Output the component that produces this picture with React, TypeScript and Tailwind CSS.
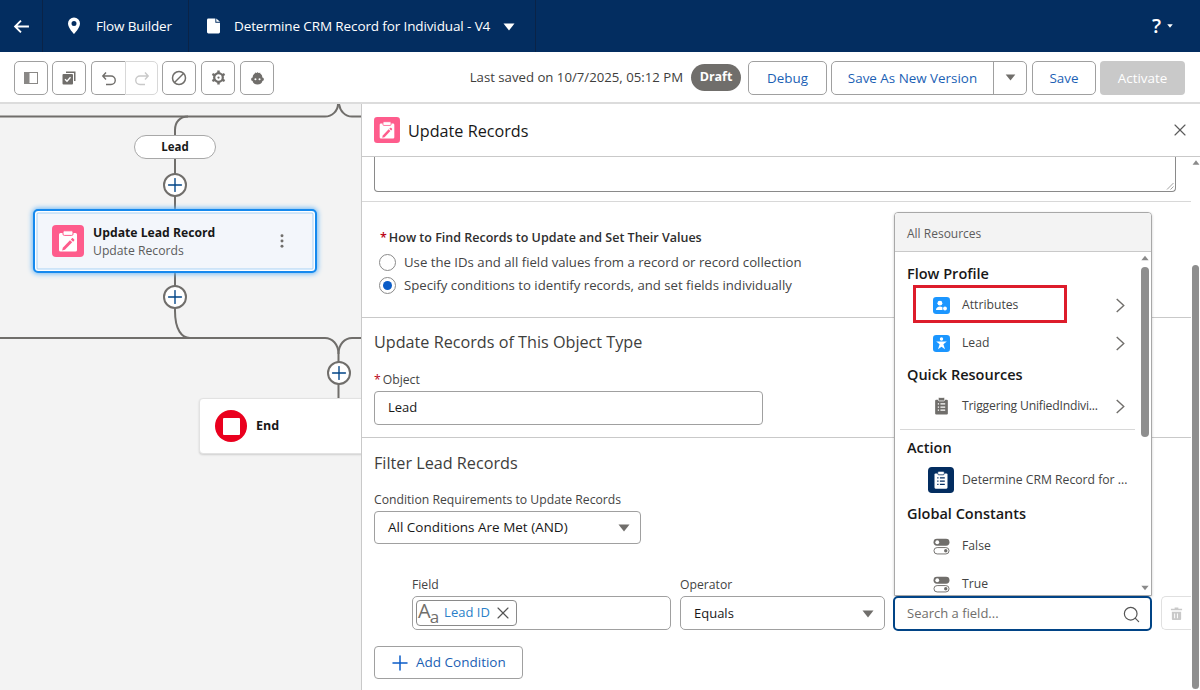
import { X, Search, Plus } from "lucide-react";
import type { ReactNode } from "react";

function Caret({ className }: { className: string }) {
  return (
    <svg viewBox="0 0 12 8" className={className} fill="currentColor">
      <path d="M0.5 0.5h11L6 7.5z" />
    </svg>
  );
}

function ToolBtn({ children, className = "" }: { children: ReactNode; className?: string }) {
  return (
    <div className={`w-[34px] h-[34px] border border-[#a0a0a0] flex items-center justify-center bg-white rounded-[5px] ${className}`}>
      {children}
    </div>
  );
}

function PlusCircle({ className }: { className: string }) {
  return (
    <div className={`absolute w-6 h-6 rounded-full bg-white border-2 border-[#706e6b] flex items-center justify-center ${className}`}>
      <Plus size={22} strokeWidth={1.5} className="text-[#014486] shrink-0" />
    </div>
  );
}

function ClipboardEdit({ className }: { className: string }) {
  return (
    <svg viewBox="0 0 32 32" className={className}>
      <rect width="32" height="32" rx="4" fill="#fe5c8c" />
      <path d="M8.5 8h15A1.5 1.5 0 0 1 25 9.5V25a1.5 1.5 0 0 1-1.5 1.5h-15A1.5 1.5 0 0 1 7 25V9.5A1.5 1.5 0 0 1 8.5 8z" fill="#fff" />
      <rect x="11" y="5.8" width="10" height="4.6" rx="1.3" fill="#fff" stroke="#fe5c8c" strokeWidth="1" />
      <path d="M10.8 22.8l7.2-7.6 2.2 2.1-7.3 7.5-2.8.7z" fill="#fe5c8c" />
      <path d="M18.8 14.4l1-1c.4-.4 1-.4 1.4 0l.9.9c.4.4.4 1 0 1.4l-1 1z" fill="#fe5c8c" />
    </svg>
  );
}

function RecordIcon({ className, bg, viewBox = "0 0 24 24" }: { className: string; bg: string; viewBox?: string }) {
  const fg = bg === "none" ? "#706e6b" : "#fff";
  const cut = bg === "none" ? "#fff" : bg;
  return (
    <svg viewBox={viewBox} className={className}>
      {bg !== "none" && <rect width="24" height="24" rx="3.5" fill={bg} />}
      <path d="M7 6h10a1 1 0 0 1 1 1v12a1 1 0 0 1-1 1H7a1 1 0 0 1-1-1V7a1 1 0 0 1 1-1z" fill={fg} />
      <rect x="9" y="4" width="6" height="3.2" rx="1" fill={fg} stroke={cut} strokeWidth="0.7" />
      <path d="M8.5 10h1.2M11 10h4.5M8.5 13h1.2M11 13h4.5M8.5 16h1.2M11 16h4.5" stroke={cut} strokeWidth="1.2" />
    </svg>
  );
}

function ToggleIcon() {
  return (
    <svg viewBox="0 0 16 16" className="w-[17px] h-[17px]">
      <rect x="0.5" y="0.8" width="15" height="6.4" rx="3.2" fill="#706e6b" />
      <circle cx="4" cy="4" r="1.8" fill="#fff" />
      <rect x="0.9" y="9" width="14.2" height="6" rx="3" fill="#fff" stroke="#706e6b" strokeWidth="0.9" />
      <circle cx="12" cy="12" r="1.6" fill="#706e6b" />
    </svg>
  );
}

function MenuItem({ icon, label, arrow, textClass = "" }: { icon: ReactNode; label: string; arrow?: boolean; textClass?: string }) {
  return (
    <div className="flex items-center h-[38px] pr-[26px] text-[12.2px] text-[#444]">
      <div className="w-[67px] pl-[25px] flex items-center justify-center shrink-0">{icon}</div>
      <span className={`flex-1 whitespace-nowrap ${textClass}`}>{label}</span>
      {arrow && (
        <svg viewBox="0 0 10 16" className="w-[10px] h-[15px] shrink-0" fill="none" stroke="#706e6b" strokeWidth="1.5">
          <path d="M1.5 1 9 8l-7.5 7" />
        </svg>
      )}
    </div>
  );
}

function Canvas() {
  return (
    <div className="relative w-[361px] shrink-0 bg-[#f3f3f3] overflow-hidden">
      <svg className="absolute left-0 top-0 w-[361px] h-[586px]" viewBox="0 0 361 586" fill="none" stroke="#706e6b" strokeWidth="2">
        <path d="M0 12.5H325C332 12.5 338 7 338 0" />
        <path d="M361 12.5H352C345 12.5 340 7 339 0" />
        <path d="M188 12.5C180 12.5 175 18 175 26V207C175 226 182 234 190 234" />
        <path d="M0 234H325C332 234 338.5 240 338.5 250V294" />
        <path d="M361 234H352C345 234 338.5 240 338.5 250" />
      </svg>
      <div className="absolute left-[134px] top-[31px] w-[82px] h-6 rounded-full bg-white border border-[#a8a8a8] flex items-center justify-center text-[11.5px] font-bold text-[#181818]">
        Lead
      </div>
      <PlusCircle className="left-[163px] top-[69px]" />
      <div className="absolute left-[33px] top-[105px] w-[284px] h-[64px] rounded-[5px] bg-[#f3f6fb] border-2 border-[#1589ee] shadow-[0_0_5px_1px_#6db8f5,inset_0_0_0_1.5px_#fff,inset_0_0_0_2.5px_#a8d1f5] flex items-center pl-[17px] pr-[31px]">
        <ClipboardEdit className="w-8 h-8 shrink-0" />
        <div className="ml-[9px] flex-1 leading-[18px] pt-[2px]">
          <div className="text-[12.2px] font-bold text-[#181818]">Update Lead Record</div>
          <div className="text-[12.2px] text-[#5c5c5c]">Update Records</div>
        </div>
        <svg viewBox="0 0 4 16" className="w-1 h-[14px] fill-[#706e6b]">
          <circle cx="2" cy="2" r="1.7" />
          <circle cx="2" cy="8" r="1.7" />
          <circle cx="2" cy="14" r="1.7" />
        </svg>
      </div>
      <PlusCircle className="left-[163px] top-[181px]" />
      <PlusCircle className="left-[327px] top-[257px]" />
      <div className="absolute left-[199px] top-[294px] w-[170px] h-[56px] rounded-[4px] bg-white border border-[#e2e2e2] shadow-[0_1px_2px_rgba(0,0,0,0.15)] flex items-center pl-[15px]">
        <div className="w-8 h-8 rounded-full bg-[#ea001e] flex items-center justify-center">
          <div className="w-[17px] h-[17px] rounded-[1px] bg-white" />
        </div>
        <span className="ml-[9px] text-[12.5px] font-bold text-[#181818]">End</span>
      </div>
    </div>
  );
}

function Dropdown() {
  return (
    <div className="absolute left-[532px] top-[108px] w-[258px] h-[384px] bg-white border border-[#a8a8a8] rounded-t-[4px] shadow-[0_1px_3px_rgba(0,0,0,0.2)] overflow-hidden">
      <div className="h-[39px] bg-[#f3f3f3] border-b border-[#c9c9c9] flex items-center pl-[12px] pt-[3px] text-[12px] text-[#5c5c5c]">
        All Resources
      </div>
      <div className="relative pl-[12px]">
        <div className="h-[14px]" />
        <div className="text-[14.5px] font-semibold text-[#181818] leading-[16px]">Flow Profile</div>
        <div className="-ml-[12px] mt-[4px]">
          <MenuItem
            arrow
            label="Attributes"
            icon={
              <svg viewBox="0 0 16 16" className="w-[17px] h-[17px]">
                <rect width="16" height="16" rx="3" fill="#1b96ff" />
                <circle cx="6.5" cy="5.8" r="2.3" fill="#fff" />
                <path d="M2.8 12.3c0-2.2 1.7-3.4 3.7-3.4 1 0 1.8.3 2.4.7v2.7z" fill="#fff" />
                <circle cx="11.3" cy="10.8" r="1.8" fill="#fff" />
              </svg>
            }
          />
          <MenuItem
            arrow
            label="Lead"
            icon={
              <svg viewBox="0 0 16 16" className="w-[17px] h-[17px]">
                <rect width="16" height="16" rx="3" fill="#1b96ff" />
                <circle cx="8" cy="3.8" r="1.6" fill="#fff" />
                <path d="M3 6h10L9.8 8.7l1.5 4.8L8 11l-3.3 2.5 1.5-4.8z" fill="#fff" />
              </svg>
            }
          />
        </div>
        <div className="absolute left-[18px] top-[33px] w-[154px] h-[38px] border-[3px] border-[#dd1c2b] pointer-events-none" />
        <div className="text-[14.5px] font-semibold text-[#181818] leading-[16px] mt-[5px]">Quick Resources</div>
        <div className="-ml-[12px] mt-[4px]">
          <MenuItem arrow label="Triggering UnifiedIndivi..." textClass="tracking-[-0.2px]" icon={<RecordIcon className="w-[15px] h-[18px]" bg="none" viewBox="5.5 3.5 13 17" />} />
        </div>
        <div className="h-px bg-[#d8d8d8] ml-[-7px] mr-[16px] mt-[4px]" />
        <div className="text-[14.5px] font-semibold text-[#181818] leading-[16px] mt-[10px]">Action</div>
        <div className="-ml-[12px] mt-[5px]">
          <MenuItem label="Determine CRM Record for ..." icon={<RecordIcon className="w-[26px] h-[26px] shrink-0" bg="#032d60" />} />
        </div>
        <div className="text-[14.5px] font-semibold text-[#181818] leading-[16px] mt-[7px]">Global Constants</div>
        <div className="-ml-[12px] mt-[5px]">
          <MenuItem label="False" icon={<ToggleIcon />} />
          <MenuItem label="True" icon={<ToggleIcon />} />
        </div>
        <div className="absolute right-[2px] top-0 w-[9px] h-[341px] flex flex-col items-center">
          <Caret className="w-2 h-[6px] mt-[3px] text-[#8a8a8a] rotate-180" />
          <div className="w-2 h-[170px] rounded-full bg-[#8e8e8e] mt-[6px]" />
          <div className="flex-1" />
          <Caret className="w-2 h-[6px] mb-[2px] text-[#8a8a8a]" />
        </div>
      </div>
    </div>
  );
}

export default function App() {
  return (
    <div className="w-[1200px] h-[690px] overflow-hidden flex flex-col bg-white font-['Open_Sans',sans-serif]">
      <header className="h-[52px] shrink-0 bg-[#032d60] flex items-center text-white">
        <div className="w-[43px] h-full border-r border-[#0a2347] flex items-center justify-center">
          <svg viewBox="0 0 16 16" className="w-[17px] h-[17px]" fill="none" stroke="#fff" strokeWidth="1.8">
            <path d="M15 8H2M7.5 2.5 2 8l5.5 5.5" />
          </svg>
        </div>
        <div className="w-[146px] h-full border-r border-[#0a2347] flex items-center pl-[24px] text-[13.5px] tracking-[-0.15px]">
          <svg viewBox="0 0 14 18" className="w-[14px] h-[18px] fill-white">
            <path fillRule="evenodd" d="M7 0.5a6 6 0 0 0-6 6C1 11 7 17 7 17s6-6 6-10.5a6 6 0 0 0-6-6zM7 9a2.5 2.5 0 1 1 0-5 2.5 2.5 0 0 1 0 5z" />
          </svg>
          <span className="ml-[15px]">Flow Builder</span>
        </div>
        <div className="w-[347px] h-full border-r border-[#0a2347] flex items-center pl-[18px] text-[13.5px] tracking-[-0.12px]">
          <svg viewBox="0 0 14 16" className="w-[13px] h-[16px] fill-white">
            <path d="M1.5 0H9v4.5h5V14.5a1.5 1.5 0 0 1-1.5 1.5h-11A1.5 1.5 0 0 1 0 14.5v-13A1.5 1.5 0 0 1 1.5 0zM10 0l4 3.5h-4z" />
          </svg>
          <span className="ml-[14px] whitespace-nowrap">Determine CRM Record for Individual - V4</span>
          <Caret className="w-[12px] h-2 ml-[13px] mt-[2px] text-white" />
        </div>
        <div className="flex-1" />
        <span className="text-[20px] font-semibold mr-[6px]">?</span>
        <Caret className="w-[6px] h-1 mr-[27px] text-white" />
      </header>

      <div className="h-[52px] shrink-0 border-b-2 border-[#dcdcdc] flex items-center pl-[14px] pr-[15px] pt-[1px] text-[13.4px]">
        <div className="flex items-center gap-[4px]">
          <ToolBtn>
            <svg viewBox="0 0 14 12" className="w-[14px] h-3">
              <rect x="0.5" y="0.5" width="13" height="11" fill="#fff" stroke="#8a8886" />
              <rect x="0.5" y="0.5" width="5" height="11" fill="#8a8886" />
            </svg>
          </ToolBtn>
          <ToolBtn>
            <svg viewBox="0 0 14 14" className="w-[14px] h-[14px]">
              <path d="M4 0.5h9.5V10H12V2H4z" fill="#706e6b" />
              <rect x="0.5" y="3" width="10.5" height="10.5" rx="1" fill="#706e6b" />
              <path d="M3 8.3l2 2 3.5-4" stroke="#fff" strokeWidth="1.3" fill="none" />
            </svg>
          </ToolBtn>
          <div className="flex ml-[1px]">
            <ToolBtn className="rounded-r-none border-r-0">
              <svg viewBox="0 0 16 16" className="w-4 h-4" fill="none" stroke="#706e6b" strokeWidth="1.4">
                <path d="M2 6h8a4 4 0 0 1 0 8.5H5M5 2.5 1.8 6 5 9.5" />
              </svg>
            </ToolBtn>
            <div className="w-[33px] h-[34px] border border-[#d8d8d8] rounded-r-[5px] flex items-center justify-center">
              <svg viewBox="0 0 16 16" className="w-4 h-4" fill="none" stroke="#c9c9c9" strokeWidth="1.4">
                <path d="M14 6H6a4 4 0 0 0 0 8.5h5M11 2.5 14.2 6 11 9.5" />
              </svg>
            </div>
          </div>
          <ToolBtn>
            <svg viewBox="0 0 16 16" className="w-4 h-4" fill="none" stroke="#706e6b" strokeWidth="1.5">
              <circle cx="8" cy="8" r="6.5" />
              <path d="M3.5 12.5 12.5 3.5" />
            </svg>
          </ToolBtn>
          <ToolBtn className="ml-[1px]">
            <svg viewBox="0 0 16 16" className="w-[15px] h-[15px]" fill="none" stroke="#706e6b">
              <circle cx="8" cy="8" r="4.6" strokeWidth="2.4" />
              <path d="M8 0.5v3M8 12.5v3M1.5 4.2l2.6 1.5M11.9 10.3l2.6 1.5M1.5 11.8l2.6-1.5M11.9 5.7l2.6-1.5" strokeWidth="2.6" />
              <circle cx="8" cy="8" r="1.2" fill="#706e6b" stroke="none" />
            </svg>
          </ToolBtn>
          <ToolBtn className="ml-[1px]">
            <svg viewBox="0 0 16 16" className="w-[15px] h-[15px]">
              <path d="M2.8 8a5.2 5.2 0 0 1 10.4 0c1 .2 1.6.9 1.6 1.9s-.6 1.7-1.6 1.9a5.2 3.6 0 0 1-10.4 0c-1-.2-1.6-.9-1.6-1.9S1.8 8.200 2.800 8z" fill="#706e6b" />
              <path d="M5.500 2.200 7 4.200l1-2 1.400 2 1.400-1.800V5H5.500z" fill="#706e6b" />
              <circle cx="5.800" cy="9.800" r="1.100" fill="#fff" />
              <circle cx="10.200" cy="9.800" r="1.100" fill="#fff" />
            </svg>
          </ToolBtn>
        </div>
        <div className="flex-1" />
        <span className="text-[13.2px] text-[#3e3e3c] whitespace-nowrap pt-[1px]">Last saved on 10/7/2025, 05:12 PM</span>
        <span className="ml-2 w-[50px] h-[27px] rounded-full bg-[#706e6b] text-white font-bold text-[12.5px] flex items-center justify-center">Draft</span>
        <div className="ml-[7px] w-[79px] h-[34px] border border-[#a0a0a0] rounded-[5px] pt-[1px] flex items-center justify-center text-[#1b5fb4]">Debug</div>
        <div className="ml-1 w-[196px] h-[34px] border border-[#a0a0a0] rounded-[5px] flex items-center text-[#1b5fb4]">
          <span className="flex-1 text-center pt-[1px]">Save As New Version</span>
          <div className="w-[33px] h-full border-l border-[#a0a0a0] flex items-center justify-center">
            <Caret className="w-[11px] h-[7px] text-[#706e6b]" />
          </div>
        </div>
        <div className="ml-[5px] w-[64px] h-[34px] border border-[#a0a0a0] rounded-[5px] pt-[1px] flex items-center justify-center text-[#1b5fb4]">Save</div>
        <div className="ml-1 w-[85px] h-[34px] bg-[#c9c9c9] rounded-[4px] pt-[1px] flex items-center justify-center text-white">Activate</div>
      </div>

      <div className="flex-1 flex min-h-0">
        <Canvas />
        <div className="relative flex-1 border-l border-[#c9c9c9] bg-white">
          <div className="h-[53px] border-b border-[#c9c9c9] flex items-center pl-[12px] pr-[11px]">
            <ClipboardEdit className="w-[26px] h-[26px]" />
            <span className="ml-[8px] text-[16.2px] text-[#181818] flex-1 pt-[2px]">Update Records</span>
            <X size={20} strokeWidth={1.4} className="text-[#5c5c5c]" />
          </div>
          <div className="absolute right-[2px] top-[53px] w-[7px] h-[532px] flex flex-col items-center">
            <Caret className="w-2 h-[5px] mt-[3px] shrink-0 text-[#8a8a8a] rotate-180" />
            <div className="w-[7px] mt-[100px] rounded-full bg-[#8e8e8e] flex-1" />
          </div>

          <div className="pr-[10px]">
            <div className="h-[45px] border-b border-[#d8d8d8] pl-[12px] pr-[15px]">
              <div className="relative h-[35px] border border-t-0 border-[#8a8a8a] rounded-b-[4px]">
                <svg viewBox="0 0 8 8" className="absolute right-[1px] bottom-[1px] w-2 h-2" fill="none" stroke="#8a8a8a" strokeWidth="0.8">
                  <path d="M1 7.500 7.500 1M4.500 7.500l3-3" />
                </svg>
              </div>
            </div>
            <div className="h-[116px] border-b border-[#c9c9c9] pl-[18px] pt-[27px] text-[13.2px] text-[#444]">
              <div className="font-semibold text-[#2e2e2e] text-[12.5px] leading-[17px]">
                <span className="text-[#ba0517] mr-[2px]">*</span>How to Find Records to Update and Set Their Values
              </div>
              <div className="flex items-center h-[23px] mt-[5px] -ml-[1px]">
                <span className="w-[17px] h-[17px] rounded-full border border-[#8a8a8a] bg-white" />
                <span className="ml-[8px]">Use the IDs and all field values from a record or record collection</span>
              </div>
              <div className="flex items-center h-[23px] -ml-[1px]">
                <span className="w-[17px] h-[17px] rounded-full border border-[#8a8a8a] bg-white flex items-center justify-center">
                  <span className="w-[9px] h-[9px] rounded-full bg-[#0b5cc7]" />
                </span>
                <span className="ml-[8px]">Specify conditions to identify records, and set fields individually</span>
              </div>
            </div>
            <div className="h-[120px] border-b border-[#c9c9c9] pl-[12px] pt-[12px]">
              <div className="text-[16.2px] text-[#3e3e3c] leading-[24px]">Update Records of This Object Type</div>
              <div className="mt-[18px] text-[12.2px] text-[#444] leading-[16px]">
                <span className="text-[#ba0517] mr-[2px]">*</span>Object
              </div>
              <div className="mt-[3px] w-[389px] h-[34px] border border-[#a0a0a0] rounded-[4px] flex items-center pl-[13px] text-[13px] text-[#181818]">Lead</div>
            </div>
            <div className="pl-[12px] pt-[13px]">
              <div className="text-[16.2px] text-[#3e3e3c] leading-[24px]">Filter Lead Records</div>
              <div className="mt-[17px] text-[12.2px] text-[#444] leading-[16px]">Condition Requirements to Update Records</div>
              <div className="mt-[3px] w-[267px] h-[33px] border border-[#a0a0a0] rounded-[4px] flex items-center pl-[13px] pr-[10px] text-[13.5px] text-[#181818]">
                <span className="flex-1">All Conditions Are Met (AND)</span>
                <Caret className="w-[12px] h-2 text-[#706e6b]" />
              </div>
              <div className="mt-[33px] ml-[38px] flex gap-[9px] items-end">
                <div className="w-[259px]">
                  <div className="text-[12.2px] text-[#444] leading-[16px] mb-[3px]">Field</div>
                  <div className="h-[34px] border border-[#a0a0a0] rounded-[5px] flex items-center pl-[3px]">
                    <div className="h-[26px] w-[101px] border border-[#8a8a8a] rounded-[4px] flex items-center pl-[1px] text-[13px] text-[#2a7fc9]">
                      <span className="text-[#706e6b] text-[20px] leading-none -mt-[4px]">A</span>
                      <span className="text-[#706e6b] text-[17px] leading-none mt-[6px] -ml-[1px]">a</span>
                      <span className="ml-[5px]">Lead ID</span>
                      <X size={20} strokeWidth={1.4} className="ml-[3px] text-[#555] shrink-0" />
                    </div>
                  </div>
                </div>
                <div className="w-[205px]">
                  <div className="text-[12.2px] text-[#444] leading-[16px] mb-[3px]">Operator</div>
                  <div className="h-[34px] border border-[#a0a0a0] rounded-[5px] flex items-center pl-[13px] pr-[10px] pt-[1px] text-[13px] text-[#181818]">
                    <span className="flex-1">Equals</span>
                    <Caret className="w-[12px] h-2 text-[#706e6b]" />
                  </div>
                </div>
                <div className="relative z-10 w-[259px] -ml-[1px] -mb-[1px] h-[35px] bg-white border-2 border-[#014486] rounded-[5px] flex items-center pl-[12px] pr-[9px] pt-[1px] text-[13px] text-[#706e6b]">
                  <span className="flex-1">Search a field...</span>
                  <Search size={19} strokeWidth={1.5} className="text-[#555]" />
                </div>
                <div className="w-[30px] h-[34px] border border-r-0 border-[#e0e0e0] rounded-l-[5px] flex items-center justify-center">
                  <svg viewBox="0 0 14 14" className="w-[13px] h-[13px] fill-[#c9c9c9]">
                    <path d="M5 0.5h4v1.500h4v1.500H1V2h4zM2 5h10v8a1 1 0 0 1-1 1H3a1 1 0 0 1-1-1zm2.500 2v5h1V7zm3 0v5h1V7z" />
                  </svg>
                </div>
              </div>
              <div className="mt-[16px] w-[149px] h-[33px] border border-[#a0a0a0] rounded-[4px] flex items-center pl-[13px] text-[13.5px] text-[#1b5fb4]">
                <Plus size={24} strokeWidth={1.5} className="text-[#0b5cc7] shrink-0" />
                <span className="ml-[4px]">Add Condition</span>
              </div>
            </div>
          </div>
          <Dropdown />
        </div>
      </div>
    </div>
  );
}
